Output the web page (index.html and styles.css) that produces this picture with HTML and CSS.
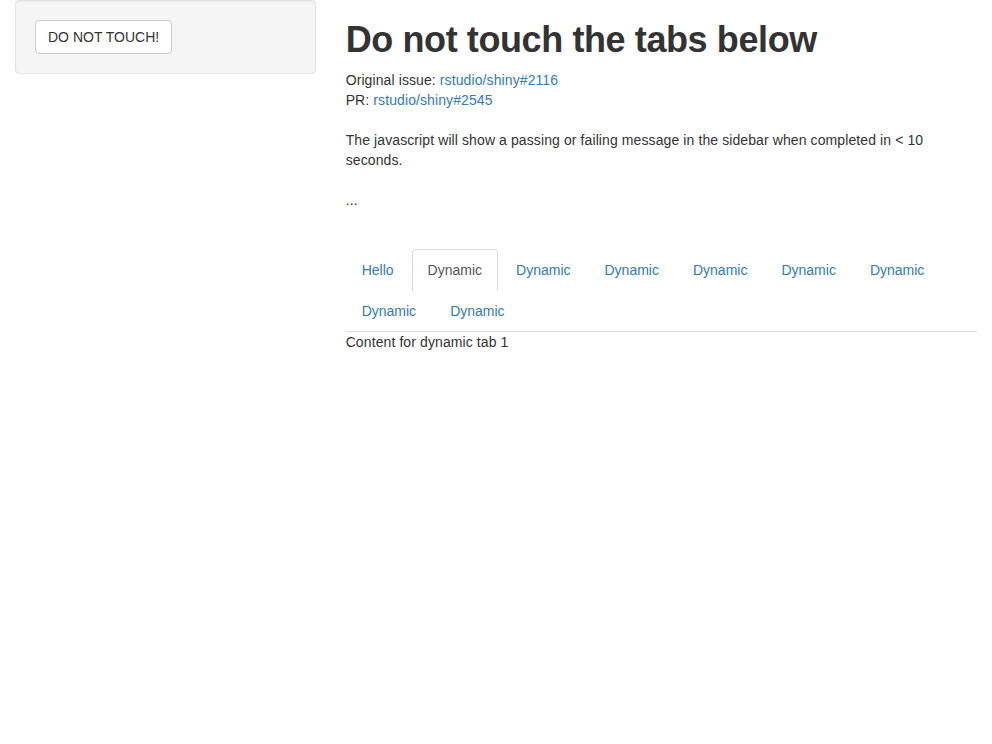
FILE: index.html
```html
<!DOCTYPE html>
<html>
<head>
<meta charset="utf-8">
<title>Do not touch the tabs below</title>
<link rel="stylesheet" href="styles.css">
</head>
<body>
<div class="container">
  <div class="row">
    <div class="sidebar">
      <div class="well">
        <button class="btn" type="button">DO NOT TOUCH!</button>
      </div>
    </div>
    <div class="main">
      <h1>Do not touch the tabs below</h1>
      <p class="p-links">Original issue: <a href="#">rstudio/shiny#2116</a><br>PR: <a href="#">rstudio/shiny#2545</a></p>
      <p class="p-desc">The javascript will show a passing or failing message in the sidebar when completed in &lt; 10 seconds.</p>
      <p class="p-dots">...</p>
      <ul class="nav-tabs">
        <li><a href="#">Hello</a></li>
        <li class="active"><a href="#">Dynamic</a></li>
        <li><a href="#">Dynamic</a></li>
        <li><a href="#">Dynamic</a></li>
        <li><a href="#">Dynamic</a></li>
        <li><a href="#">Dynamic</a></li>
        <li><a href="#">Dynamic</a></li>
        <li><a href="#">Dynamic</a></li>
        <li><a href="#">Dynamic</a></li>
      </ul>
      <div class="tab-content">Content for dynamic tab 1</div>
    </div>
  </div>
</div>
</body>
</html>
```
FILE: styles.css
```css
* { box-sizing: border-box; }
html, body { margin: 0; padding: 0; }
body {
  font-family: "Liberation Sans", Arial, sans-serif;
  font-size: 14px;
  line-height: 20px;
  color: #333;
  background: #fff;
  letter-spacing: 0.1px;
}
a { color: #337ab7; text-decoration: none; }
.container { padding: 0 15px; }
.row { display: flex; margin: 0 -15px; }
.sidebar { width: 33.3333%; padding: 0 15px; }
.main { width: 66.6667%; padding: 0 15px; }
.well {
  background: #f5f5f5;
  border: 1px solid #e3e3e3;
  border-radius: 4px;
  box-shadow: inset 0 1px 1px rgba(0,0,0,.05);
  padding: 19px;
  margin-bottom: 20px;
}
.btn {
  font-family: inherit;
  font-size: 14px;
  line-height: 20px;
  color: #333;
  background: #fff;
  border: 1px solid #ccc;
  border-radius: 4px;
  padding: 6px 12px;
  height: 34px;
  display: inline-block;
  letter-spacing: 0;
}
h1 {
  font-size: 36px;
  font-weight: 700;
  line-height: 39.6px;
  margin: 20px 0 10px;
  color: #333;
  letter-spacing: -0.4px;
}
p { margin: 0; }
.p-links { margin-bottom: 20px; }
.p-desc { margin-bottom: 20px; }
.p-dots { margin-bottom: 39.4px; }
.nav-tabs {
  list-style: none;
  margin: 0;
  padding: 0;
  display: flex;
  flex-wrap: wrap;
  border-bottom: 1px solid #ddd;
}
.nav-tabs li { margin-bottom: -1px; }
.nav-tabs li a {
  display: block;
  padding: 10px 15px;
  line-height: 20px;
  margin-right: 2px;
  border: 1px solid transparent;
  border-radius: 4px 4px 0 0;
  letter-spacing: 0;
}
.nav-tabs li.active a {
  color: #555;
  background: #fff;
  border-color: #ddd #ddd transparent;
}
.tab-content { line-height: 20px; }
```
